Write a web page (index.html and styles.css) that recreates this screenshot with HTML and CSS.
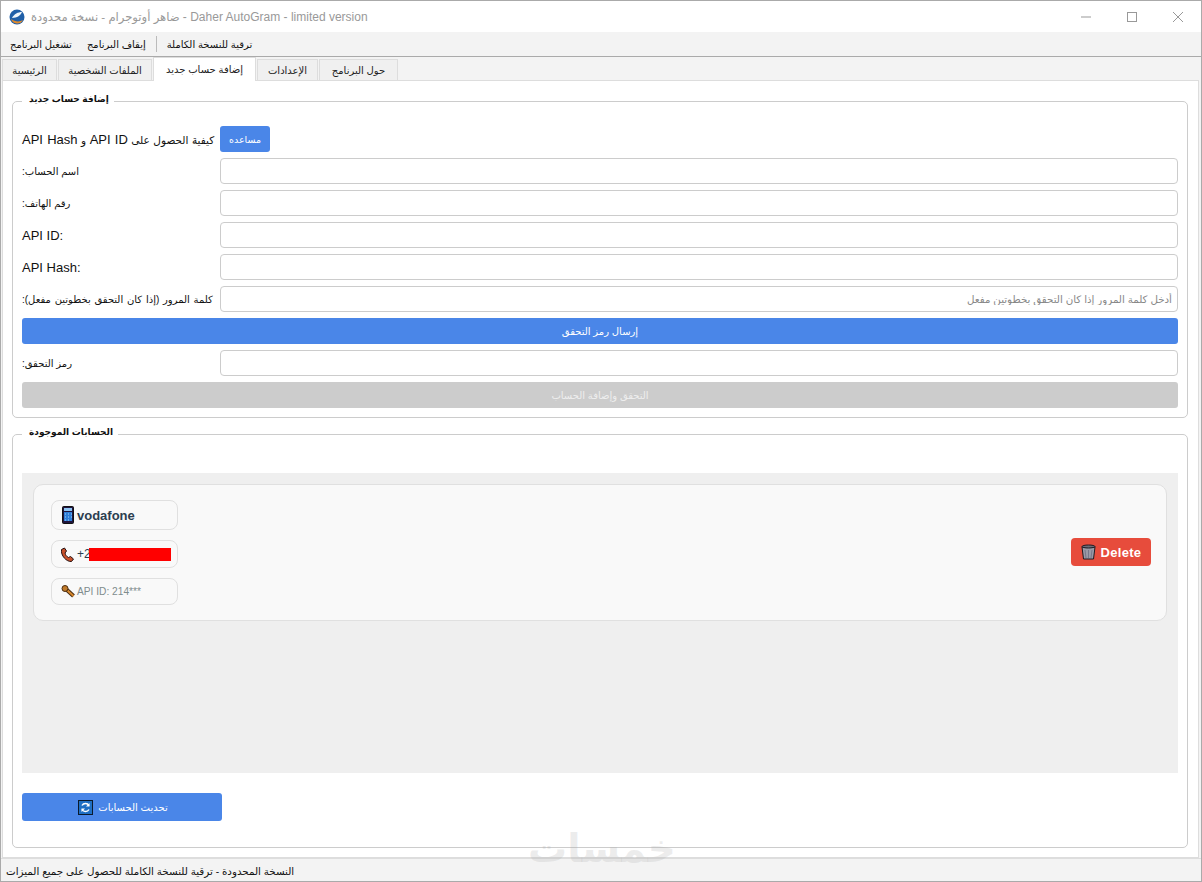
FILE: index.html
```html
<!DOCTYPE html>
<html lang="ar">
<head>
    <meta charset="UTF-8">
    <title>Daher AutoGram - limited version</title>
    <link rel="stylesheet" href="styles.css">
</head>
<body>
    <div class="window">
        <!-- Title bar -->
        <div class="title-bar">
            <svg class="app-icon" width="16" height="16" viewBox="0 0 16 16">
                <circle cx="8" cy="8" r="7.5" fill="#1f5fa8"/>
                <path d="M2 10a6.5 6.5 0 0 0 12 1c-3 2-8 2-12-1z" fill="#e08a2c"/>
                <path d="M3 9c2-4 6-6 10-6-1 3-5 6-10 6z" fill="#eef5fb"/>
            </svg>
            <span class="title-text" dir="ltr"><span class="title-ar">ضاهر أوتوجرام - نسخة محدودة</span> - Daher AutoGram - limited version</span>
            <div class="window-controls">
                <span class="control">
                    <svg width="12" height="12" viewBox="0 0 12 12"><path d="M1 6h10" stroke="#999" fill="none"/></svg>
                </span>
                <span class="control">
                    <svg width="12" height="12" viewBox="0 0 12 12"><rect x="1.5" y="1.5" width="9" height="9" stroke="#999" fill="none"/></svg>
                </span>
                <span class="control">
                    <svg width="12" height="12" viewBox="0 0 12 12"><path d="M1 1l10 10M11 1L1 11" stroke="#999" fill="none"/></svg>
                </span>
            </div>
        </div>

        <!-- Menu -->
        <div class="menu-bar">
            <span class="menu-item">تشغيل البرنامج</span>
            <span class="menu-item">إيقاف البرنامج</span>
            <span class="menu-sep"></span>
            <span class="menu-item">ترقية للنسخة الكاملة</span>
        </div>

        <!-- Tabs -->
        <div class="tabs">
            <span class="tab tab-home">الرئيسية</span>
            <span class="tab tab-profiles">الملفات الشخصية</span>
            <span class="tab tab-active">إضافة حساب جديد</span>
            <span class="tab tab-settings">الإعدادات</span>
            <span class="tab tab-about">حول البرنامج</span>
        </div>

        <div class="tab-pane">
            <fieldset class="group">
                <legend>إضافة حساب جديد</legend>
                <div class="form-grid">
                    <label dir="rtl" class="label-help">كيفية الحصول على <span class="latin">API ID</span> و <span class="latin">API Hash</span></label>
                    <button class="btn btn-help">مساعده</button>

                    <label dir="rtl">اسم الحساب:</label>
                    <input type="text">

                    <label dir="rtl">رقم الهاتف:</label>
                    <input type="text">

                    <label dir="ltr" class="latin">API ID:</label>
                    <input type="text">

                    <label dir="ltr" class="latin">API Hash:</label>
                    <input type="text">

                    <label dir="rtl" class="label-long">كلمة المرور (إذا كان التحقق بخطوتين مفعل):</label>
                    <input type="password" dir="rtl" placeholder="أدخل كلمة المرور إذا كان التحقق بخطوتين مفعل">

                    <button class="btn btn-wide">إرسال رمز التحقق</button>

                    <label dir="rtl">رمز التحقق:</label>
                    <input type="text">

                    <button class="btn btn-wide btn-disabled" disabled>التحقق وإضافة الحساب</button>
                </div>
            </fieldset>

            <fieldset class="group group-accounts">
                <legend>الحسابات الموجودة</legend>
                <div class="accounts-scroll">
                    <div class="account-card">
                        <div class="account-info">
                            <div class="pill pill-name">
                                <svg width="14" height="18" viewBox="0 0 14 18">
                                    <rect x="1.5" y="0.5" width="11" height="17" rx="1" fill="#20143c" stroke="#111"/>
                                    <rect x="3" y="2" width="8" height="3" fill="#8fc4f2"/>
                                    <rect x="3" y="6" width="8" height="9" fill="#2f7fd8"/>
                                    <path d="M4 8h1M7 8h1M10 8h1M4 11h1M7 11h1M10 11h1M4 14h1M7 14h1" stroke="#a8d4f7"/>
                                </svg>
                                <span>vodafone</span>
                            </div>
                            <div class="pill pill-phone">
                                <svg width="14" height="15" viewBox="0 0 14 15">
                                    <path d="M.5 2.500 3.500 1l2 3-1.500 2c.5 2 1.500 3.500 3.500 4.500l2-1 3 2.500-2 2.500C5.500 15-.5 8.500.5 2.500z" fill="#c8502a" stroke="#241010" stroke-width="1"/>
                                </svg>
                                <span class="phone-num">+2</span><span class="redacted"></span>
                            </div>
                            <div class="pill pill-api">
                                <svg width="14" height="13" viewBox="0 0 14 13">
                                    <path d="M6 5l6.500 6" stroke="#4a2c10" stroke-width="4"/>
                                    <path d="M6 5l6.500 6" stroke="#d8892e" stroke-width="2"/>
                                    <circle cx="4" cy="3.500" r="3" fill="#c07a2a" stroke="#4a2c10"/>
                                </svg>
                                <span>API ID: 214***</span>
                            </div>
                        </div>
                        <button class="btn btn-delete">
                            <svg width="15" height="16" viewBox="0 0 15 16">
                                <path d="M1 3h13L12.500 15h-10z" fill="#9a9aa6" stroke="#1c1c24"/>
                                <path d="M4 6l1 8M7.500 6v8M11 6l-1 8" stroke="#77778a"/>
                                <ellipse cx="7.500" cy="2.500" rx="6.500" ry="1.500" fill="#6d6d78" stroke="#1c1c24"/>
                            </svg>
                            Delete
                        </button>
                    </div>
                </div>
                <button class="btn btn-refresh">
                    <svg width="15" height="15" viewBox="0 0 15 15">
                        <rect x="0.500" y="0.500" width="14" height="14" fill="#1f6fc4" stroke="#0b1a2c"/>
                        <path d="M11 5.500A4 4 0 0 0 4 5.500M4 9.500a4 4 0 0 0 7 0" stroke="#fff" stroke-width="1.500" fill="none"/>
                        <path d="M11.500 3v3.500H8zM3.500 12V8.500H7z" fill="#fff"/>
                    </svg>
                    <span>تحديث الحسابات</span>
                </button>
            </fieldset>
        </div>

        <div class="status-bar" dir="rtl">
            <span>النسخة المحدودة - ترقية للنسخة الكاملة للحصول على جميع الميزات</span>
        </div>

        <div class="watermark">خمسات</div>
    </div>
</body>
</html>
```

FILE: styles.css
```css
* {
    margin: 0;
    padding: 0;
    box-sizing: border-box;
}

body {
    font-family: "Liberation Sans", "DejaVu Sans", sans-serif;
    font-size: 12px;
    color: #222;
    background: #f3f3f3;
    direction: ltr;
}

.window {
    position: relative;
    width: 1202px;
    height: 882px;
    display: flex;
    flex-direction: column;
    border: 1px solid #aaa;
    background: #f3f3f3;
    overflow: hidden;
}

/* Title bar */
.title-bar {
    height: 31px;
    flex: none;
    display: flex;
    align-items: center;
    background: white;
    padding-left: 8px;
}

.app-icon {
    margin-right: 6px;
}

.title-text {
    color: #999;
    font-size: 12px;
    flex: 1;
}

.title-ar {
    font-size: 11.600px;
}

.window-controls {
    display: flex;
}

.control {
    width: 46px;
    height: 31px;
    display: flex;
    align-items: center;
    justify-content: center;
}

/* Menu */
.menu-bar {
    height: 25px;
    flex: none;
    display: flex;
    align-items: center;
    padding-left: 9px;
    border-bottom: 1px solid #aaa;
    font-size: 10px;
    color: #111;
}

.menu-item {
    margin-right: 15px;
}

.menu-sep {
    width: 1px;
    height: 16px;
    background: #bbb;
    margin: 0 10px 0 -5px;
}

/* Tabs */
.tabs {
    height: 23px;
    flex: none;
    display: flex;
    align-items: flex-end;
    padding-left: 1px;
    font-size: 10px;
}

.tab {
    height: 21px;
    display: flex;
    align-items: center;
    justify-content: center;
    border: 1px solid #ddd;
    border-bottom: none;
    background: #f0f0f0;
    margin-right: 1px;
}

.tab-home { width: 55px; }
.tab-profiles { width: 94px; }
.tab-settings { width: 61px; }
.tab-about { width: 79px; }

.tab-active {
    width: 103px;
    height: 24px;
    background: white;
    margin-bottom: -1px;
    position: relative;
}

.tab-pane {
    flex: 1;
    margin: 0 2px 0 1px;
    padding: 13px 10px 9px 9px;
    background: white;
    border: 1px solid #ddd;
    display: flex;
    flex-direction: column;
}

/* Group boxes */
.group {
    border: 1px solid #ccc;
    border-radius: 5px;
    padding: 18px 9px 9px;
}

.group legend {
    padding: 0 5px 0 7px;
    height: 14px;
    line-height: 10px;
    font-size: 9px;
    font-weight: bold;
    color: #111;
}

.group-accounts {
    flex: 1;
    margin-top: 9px;
    padding: 32px 9px 26px;
}

.form-grid {
    display: grid;
    grid-template-columns: 198px 1fr;
    gap: 6px 0;
}

.form-grid label {
    align-self: center;
    justify-self: start;
    font-size: 10px;
    color: #111;
}

.form-grid .label-help {
    font-size: 10.500px;
    word-spacing: 0.600px;
}

.form-grid .latin {
    font-size: 13px;
}

.form-grid .label-long {
    word-spacing: 1px;
}

input {
    height: 26px;
    width: 100%;
    border: 1px solid #ccc;
    border-radius: 4px;
    padding: 0 5px;
    font-family: inherit;
    font-size: 10.300px;
    outline: none;
}

input::placeholder {
    color: #888;
}

/* Buttons */
.btn {
    border: none;
    border-radius: 3px;
    background: #4a86e8;
    color: white;
    font-family: inherit;
    font-size: 10px;
    height: 26px;
}

.btn-help {
    width: 50px;
    font-size: 9.500px;
}

.btn-wide {
    grid-column: 1 / -1;
}

.btn-disabled {
    background: #ccc;
    color: #eee;
}

.btn-delete {
    display: flex;
    align-items: center;
    justify-content: center;
    gap: 5px;
    width: 80px;
    height: 28px;
    margin-top: -1px;
    background: #e74c3c;
    font-size: 13px;
    font-weight: bold;
    letter-spacing: 0.3px;
    border-radius: 4px;
}

.btn-refresh {
    display: flex;
    align-items: center;
    justify-content: center;
    gap: 5px;
    width: 200px;
    height: 28px;
    margin-top: 20px;
    padding-left: 2px;
}

/* Accounts list */
.accounts-scroll {
    height: 300px;
    padding: 11px;
    background: #efefef;
}

.account-card {
    height: 137px;
    display: flex;
    align-items: center;
    justify-content: space-between;
    padding: 15px 15px 15px 17px;
    background: #f9f9f9;
    border: 1px solid #e0e0e0;
    border-radius: 10px;
}

.account-info {
    width: 127px;
    display: flex;
    flex-direction: column;
    gap: 10px;
}

.pill {
    display: flex;
    align-items: center;
    gap: 2px;
    padding-left: 9px;
    border: 1px solid #e0e0e0;
    border-radius: 8px;
    color: #2c3e50;
}

.pill-name {
    height: 30px;
    font-size: 13px;
    font-weight: bold;
}

.pill-phone {
    height: 28px;
}

.phone-num {
    margin-right: -4px;
}

.redacted {
    width: 82px;
    height: 13px;
    background: #f00;
}

.pill-api {
    height: 27px;
    font-size: 10.200px;
    color: #7f8c8d;
}

.status-bar {
    height: 24px;
    flex: none;
    display: flex;
    align-items: center;
    justify-content: flex-end;
    padding-left: 5px;
    border-top: 1px solid #ddd;
    font-size: 10.300px;
    color: #111;
}

/* Site watermark on top of the screenshot */
.watermark {
    position: absolute;
    left: 527px;
    top: 825px;
    font-size: 39px;
    font-weight: bold;
    line-height: 46px;
    color: rgba(170, 170, 170, 0.22);
    pointer-events: none;
}
```
